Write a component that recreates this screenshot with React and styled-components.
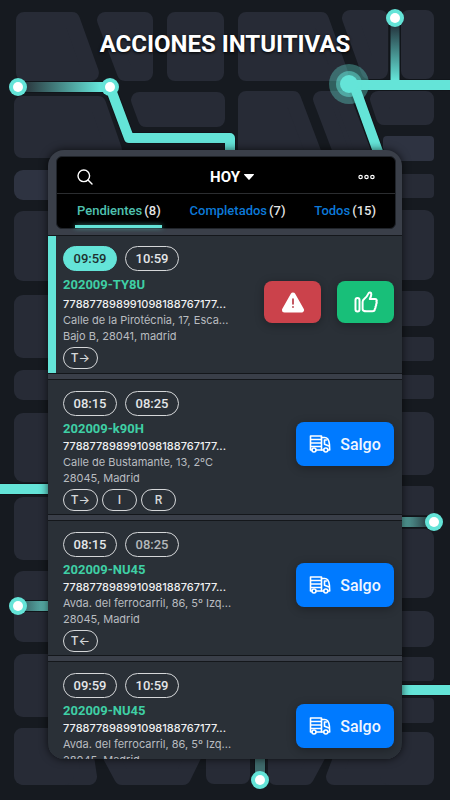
import React, { useState } from "react";
import styled, { createGlobalStyle, css } from "styled-components";

const TEAL = "#64e4d8";

const tabs = [
  { name: "Pendientes", count: 8 },
  { name: "Completados", count: 7 },
  { name: "Todos", count: 15 },
];

const orders = [
  {
    from: "09:59",
    to: "10:59",
    code: "202009-TY8U",
    address: "Calle de la Pirotécnia, 17, Esca...",
    city: "Bajo B, 28041, madrid",
    tags: ["T→"],
    active: true,
  },
  {
    from: "08:15",
    to: "08:25",
    code: "202009-k90H",
    address: "Calle de Bustamante, 13, 2ºC",
    city: "28045, Madrid",
    tags: ["T→", "I", "R"],
  },
  {
    from: "08:15",
    to: "08:25",
    code: "202009-NU45",
    address: "Avda. del ferrocarril, 86, 5º Izq...",
    city: "28045, Madrid",
    tags: ["T←"],
    dim: true,
  },
  {
    from: "09:59",
    to: "10:59",
    code: "202009-NU45",
    address: "Avda. del ferrocarril, 86, 5º Izq...",
    city: "28045, Madrid",
    tags: [],
  },
];

const App = () => {
  const [tab, setTab] = useState("Pendientes");

  return (
    <Page>
      <GlobalStyle />
      <CityMap />
      <Title>ACCIONES INTUITIVAS</Title>
      <Phone>
        <Header>
          <Toolbar>
            <IconButton aria-label="Buscar">
              <SearchIcon />
            </IconButton>
            <DayButton>
              HOY
              <svg width="10" height="6" viewBox="0 0 10 6">
                <path d="M0.5 0h9a.5.5 0 0 1 .4.8L5.6 5.6a.8.8 0 0 1-1.2 0L.1.8A.5.5 0 0 1 .5 0z" fill="#fff" />
              </svg>
            </DayButton>
            <IconButton aria-label="Más" $end>
              <DotsIcon />
            </IconButton>
          </Toolbar>
          <Tabs>
            {tabs.map((t) => (
              <Tab key={t.name} $active={t.name === tab} onClick={() => setTab(t.name)}>
                {t.name} <Count>({t.count})</Count>
              </Tab>
            ))}
          </Tabs>
        </Header>
        <List>
          {orders.map((order, index) => (
            <Order key={index} order={order} />
          ))}
        </List>
      </Phone>
    </Page>
  );
};

const Order = ({ order }) => {
  return (
    <Row $active={order.active}>
      <Info>
        <Times>
          <TimePill $active={order.active}>{order.from}</TimePill>
          <TimePill $dim={order.dim}>{order.to}</TimePill>
        </Times>
        <Code $active={order.active}>{order.code}</Code>
        <Line $bright>778877898991098188767177...</Line>
        <Line>{order.address}</Line>
        <Line>{order.city}</Line>
        <Tags>
          {order.tags.map((tag) => (
            <Tag key={tag}>{tag}</Tag>
          ))}
        </Tags>
      </Info>
      <Actions $active={order.active}>
        {order.active ? (
          <>
            <SquareButton aria-label="Incidencia" $color="#cb424b">
              <WarningIcon />
            </SquareButton>
            <SquareButton aria-label="Entregado" $color="#18bf79">
              <ThumbIcon />
            </SquareButton>
          </>
        ) : (
          <GoButton>
            <TruckIcon />
            Salgo
          </GoButton>
        )}
      </Actions>
    </Row>
  );
};

const SearchIcon = () => (
  <svg width="16" height="16" viewBox="0 0 16 16" fill="none" stroke="#fff" strokeWidth="1.4" strokeLinecap="round">
    <circle cx="6.8" cy="6.8" r="5.8" />
    <path d="M11 11l4 4" />
  </svg>
);

const DotsIcon = () => (
  <svg width="17" height="6" viewBox="0 0 17 6" fill="none" stroke="#fff" strokeWidth="1.2">
    <circle cx="2.6" cy="3" r="1.7" />
    <circle cx="8.5" cy="3" r="1.7" />
    <circle cx="14.4" cy="3" r="1.7" />
  </svg>
);

const WarningIcon = () => (
  <svg width="24" height="21" viewBox="0 0 24 21">
    <path
      d="M12 3L20.500 18H3.500z"
      fill="#fff"
      stroke="#fff"
      strokeWidth="5"
      strokeLinejoin="round"
    />
    <path d="M12 7v5M12 14.800v.4" stroke="#b5303c" strokeWidth="1.6" strokeLinecap="round" />
  </svg>
);

const ThumbIcon = () => (
  <svg
    width="24"
    height="22"
    viewBox="0 0 24 22"
    fill="none"
    stroke="#fff"
    strokeWidth="2"
    strokeLinejoin="round"
    strokeLinecap="round"
  >
    <rect x="1.5" y="7" width="4" height="13.5" rx="2" />
    <path d="M8.6 18.2v-7.4c0-1.4.7-2.2 1.8-3.1 1.9-1.5 3.2-3.2 4-5.2.6-1.5 3-1.2 2.9.9-.1 1.7-.8 3.1-1.5 4.6h5.1c1.7 0 2.3 1.6 1.5 2.7.5.9.4 1.8-.3 2.5.3.9.1 1.7-.6 2.3.2.9 0 1.7-.6 2.2 0 1.7-.9 2.6-2.6 2.6h-5.600c-1.900 0-4.100-.500-4.100-2.100z" />
  </svg>
);

const TruckIcon = () => (
  <svg
    width="22"
    height="18"
    viewBox="0 0 22 18"
    fill="none"
    stroke="#fff"
    strokeWidth="1.6"
    strokeLinejoin="round"
    strokeLinecap="round"
  >
    <path d="M2.500 15H1.500V1H12.500V15H7.400M1.500 4.500h11M1.500 8h11M1.500 11.500h11" />
    <path d="M12.500 2.500h3.200c2.700 0 4.300 3.200 4.700 6.500l.3 6h-1.500M12.500 15h2" />
    <path d="M15.500 5v4.200l4.600 1.800M15.500 5h2" />
    <circle cx="5" cy="15" r="2" />
    <circle cx="16.800" cy="15" r="2" />
  </svg>
);

// Street blocks, every shape gets its round corners from the wide stroke
const blocks = [
  "24,20 72,20 91,73 24,73",
  "105,20 145,20 145,73 125,73",
  "175,20 216,20 216,73 175,73",
  "246,20 321,20 340,73 246,73",
  "350,18 380,18 380,71 369,71",
  "409,18 426,18 426,71 409,71",
  "22,104 98,104 114,150 22,150",
  "139,100 217,100 217,119 146,119",
  "246,99 293,99 318,165 246,165",
  "321,99 343,99 368,165 346,165",
  "378,99 426,99 426,117 384,117",
  "22,736 83,736 89,777 24,777",
  "100,736 203,736 183,777 122,777",
  "214,736 242,736 242,776 214,776",
  "276,736 328,736 306,777 276,777",
  "348,740 426,740 426,777 334,777",
];

const leftBlocks = [
  [211, 281], [295, 358], [370, 400], [413, 482], [497, 560], [571, 605], [605, 642], [654, 717], [728, 785],
];

const rightBlocks = [
  [174, 198], [210, 280], [291, 326], [337, 361], [375, 399], [412, 475],
  [486, 515], [529, 598], [611, 647], [657, 681], [698, 723], [732, 785],
];

const nodes = [
  [18, 87], [110, 87], [395, 18], [434, 522], [18, 606], [260, 780],
];

const CityMap = () => (
  <MapSvg viewBox="0 0 450 800" preserveAspectRatio="none" aria-hidden="true">
    <defs>
      <linearGradient id="fadeRight" gradientUnits="userSpaceOnUse" x1="24" y1="0" x2="100" y2="0">
        <stop offset="0" stopColor="#2a343b" />
        <stop offset="1" stopColor={TEAL} />
      </linearGradient>
      <linearGradient id="fadeDown" gradientUnits="userSpaceOnUse" x1="0" y1="24" x2="0" y2="80">
        <stop offset="0" stopColor="#23303a" />
        <stop offset="1" stopColor={TEAL} />
      </linearGradient>
      <linearGradient id="fadeLeft" gradientUnits="userSpaceOnUse" x1="400" y1="0" x2="430" y2="0">
        <stop offset="0" stopColor="#5cb5ae" />
        <stop offset="1" stopColor="#27353c" />
      </linearGradient>
      <linearGradient id="fadeSide" gradientUnits="userSpaceOnUse" x1="24" y1="0" x2="50" y2="0">
        <stop offset="0" stopColor="#3c6a6c" />
        <stop offset="1" stopColor="#60c5bc" />
      </linearGradient>
    </defs>
    <g fill="#272b36" stroke="#272b36" strokeWidth="16" strokeLinejoin="round">
      {blocks.map((points) => (
        <polygon key={points} points={points} />
      ))}
    </g>
    <g fill="#272b36">
      {leftBlocks.map(([top, bottom]) => (
        <rect key={top} x="14" y={top} width="60" height={bottom - top} rx="9" />
      ))}
      {rightBlocks.map(([top, bottom]) => (
        <rect key={top} x="380" y={top} width="54" height={bottom - top} rx={bottom - top < 30 ? 4 : 9} />
      ))}
    </g>
    <rect x="14" y="170" width="50" height="30" rx="9" fill="#2e3341" />
    <rect x="383" y="136" width="51" height="25" rx="4" fill="#2e3341" />
    <g fill="none" stroke="#11151a" strokeWidth="12" strokeLinejoin="round">
      <path d="M18 87H110L129 138H230V160M0 489H60M18 606H60M390 522H434M390 690H450M260 750V780" />
      <path d="M395 18V85M349 85H450M354 85L381 160" />
    </g>
    <g fill="none" stroke={TEAL} strokeWidth="10" strokeLinejoin="round">
      <path d="M18 87H110" stroke="url(#fadeRight)" />
      <path d="M110 87L129 138H230V160" />
      <path d="M395 20V84" stroke="url(#fadeDown)" strokeWidth="9" />
      <path d="M349 85H450M354 85L381 160" />
      <path d="M0 489H60M390 690H450" />
      <path d="M18 606H60" stroke="url(#fadeSide)" />
      <path d="M390 522H434" stroke="url(#fadeLeft)" />
      <path d="M260 750V780" stroke="#3f6b6c" />
    </g>
    <circle cx="349" cy="84" r="20" fill={TEAL} opacity="0.35" />
    <circle cx="349" cy="84" r="13" fill={TEAL} opacity="0.5" />
    <circle cx="349" cy="84" r="9" fill={TEAL} />
    {nodes.map(([x, y]) => (
      <g key={`${x}-${y}`}>
        <circle cx={x} cy={y} r="9" fill={TEAL} />
        <circle cx={x} cy={y} r="5" fill="#fff" />
      </g>
    ))}
  </MapSvg>
);

// Styled components
const GlobalStyle = createGlobalStyle`
  * {
    box-sizing: border-box;
  }
  body {
    margin: 0;
    background: #161a20;
    font-family: Roboto, "Liberation Sans", sans-serif;
  }
  button {
    font-family: inherit;
    border: 0;
    padding: 0;
    background: none;
    cursor: pointer;
  }
`;

const Page = styled.main`
  position: relative;
  display: flex;
  flex-direction: column;
  height: 100vh;
  padding: 28px 48px 41px;
  overflow: hidden;
`;

const MapSvg = styled.svg`
  position: absolute;
  inset: 0;
  width: 100%;
  height: 100%;
`;

const Title = styled.h1`
  position: relative;
  margin: 0 0 90px;
  color: #fff;
  font-size: 24px;
  font-weight: 700;
  line-height: 32px;
  text-align: center;
  white-space: nowrap;
  text-shadow: 0 1px 3px #000;
`;

const Phone = styled.section`
  position: relative;
  flex: 1;
  min-height: 0;
  overflow: hidden;
  background: #3a3f49;
  border-radius: 16px;
  box-shadow: 0 0 8px rgba(0, 0, 0, 0.7);
`;

const Header = styled.header`
  margin: 6px 6px 7px 8px;
  background: #000;
  border: 1px solid #20242a;
  border-radius: 6px;
`;

const Toolbar = styled.div`
  display: grid;
  grid-template-columns: 1fr auto 1fr;
  align-items: center;
  height: 37px;
  padding: 4px 20px 0;
  border-bottom: 1px solid #2b2d30;
`;

const IconButton = styled.button`
  display: flex;
  justify-self: ${({ $end }) => ($end ? "end" : "start")};
`;

const DayButton = styled.button`
  display: flex;
  align-items: center;
  gap: 4px;
  padding-left: 12px;
  color: #fff;
  font-size: 15px;
  font-weight: 700;
`;

const Tabs = styled.nav`
  display: flex;
  justify-content: space-between;
  height: 34px;
  padding: 0 18px;
`;

const Tab = styled.button`
  position: relative;
  display: flex;
  align-items: center;
  gap: 2px;
  padding: 0 1px 1px 2px;
  color: #0c79d8;
  font-size: 13px;
  font-weight: 500;

  ${({ $active }) =>
    $active &&
    css`
      color: #4fc1b0;

      &::after {
        content: "";
        position: absolute;
        right: 0;
        bottom: 0;
        left: 0;
        height: 3px;
        background: ${TEAL};
        box-shadow: 0 0 5px rgba(100, 228, 216, 0.6);
      }
    `}
`;

const Count = styled.span`
  color: #e6e6e6;
`;

const List = styled.div`
  display: flex;
  flex-direction: column;
  gap: 7px;
`;

const Row = styled.article`
  display: flex;
  justify-content: space-between;
  padding: ${({ $active }) => ($active ? "10px 8px 4px 7px" : "11px 8px 3px 15px")};
  border-left: ${({ $active }) => ($active ? `8px solid ${TEAL}` : "0")};
  background: #2a3037;
  box-shadow: 0 0 0 1px #14171b;
`;

const Info = styled.div`
  min-width: 0;
`;

const Times = styled.div`
  display: flex;
  gap: 8px;
`;

const TimePill = styled.time`
  width: 54px;
  height: 25px;
  border: 1px solid ${({ $active }) => ($active ? TEAL : "#d5d7d9")};
  border-radius: 13px;
  background: ${({ $active }) => ($active ? TEAL : "transparent")};
  color: ${({ $active, $dim }) => ($active ? "#20302f" : $dim ? "#b5b8bb" : "#e4e6e8")};
  font-size: 13px;
  font-weight: 500;
  line-height: 23px;
  text-align: center;
`;

const Code = styled.h2`
  margin: ${({ $active }) => ($active ? "5px 0 2px" : "4px 0 0")};
  color: #3fcfa5;
  font-size: 13px;
  font-weight: 700;
  line-height: 18px;
`;

const Line = styled.p`
  margin: 0;
  color: ${({ $bright }) => ($bright ? "#f0f1f2" : "#b9bcc0")};
  font-family: Inter, Roboto, sans-serif;
  font-size: 11px;
  font-weight: ${({ $bright }) => ($bright ? 500 : 400)};
  line-height: 16px;
  white-space: nowrap;
`;

const Tags = styled.div`
  display: flex;
  gap: 4px;
  margin-top: 3px;
`;

const Tag = styled.span`
  width: 35px;
  height: 22px;
  border: 1px solid #d5d7d9;
  border-radius: 11px;
  color: #d5d7d9;
  font-family: Roboto, Inter, sans-serif;
  font-size: 12px;
  font-weight: 500;
  line-height: 20px;
  text-align: center;
`;

const Actions = styled.div`
  display: flex;
  align-items: flex-start;
  gap: 16px;
  padding-top: ${({ $active }) => ($active ? 35 : 31)}px;
`;

const ActionButton = styled.button`
  display: flex;
  align-items: center;
  justify-content: center;
  border-radius: 8px;
  box-shadow: 0 2px 10px rgba(0, 0, 0, 0.3);
`;

const SquareButton = styled(ActionButton)`
  width: 57px;
  height: 42px;
  background: ${({ $color }) => $color};
`;

const GoButton = styled(ActionButton)`
  gap: 9px;
  width: 98px;
  height: 44px;
  background: #007aff;
  color: #f0f6ff;
  font-size: 16px;
  font-weight: 500;
`;

export default App;
